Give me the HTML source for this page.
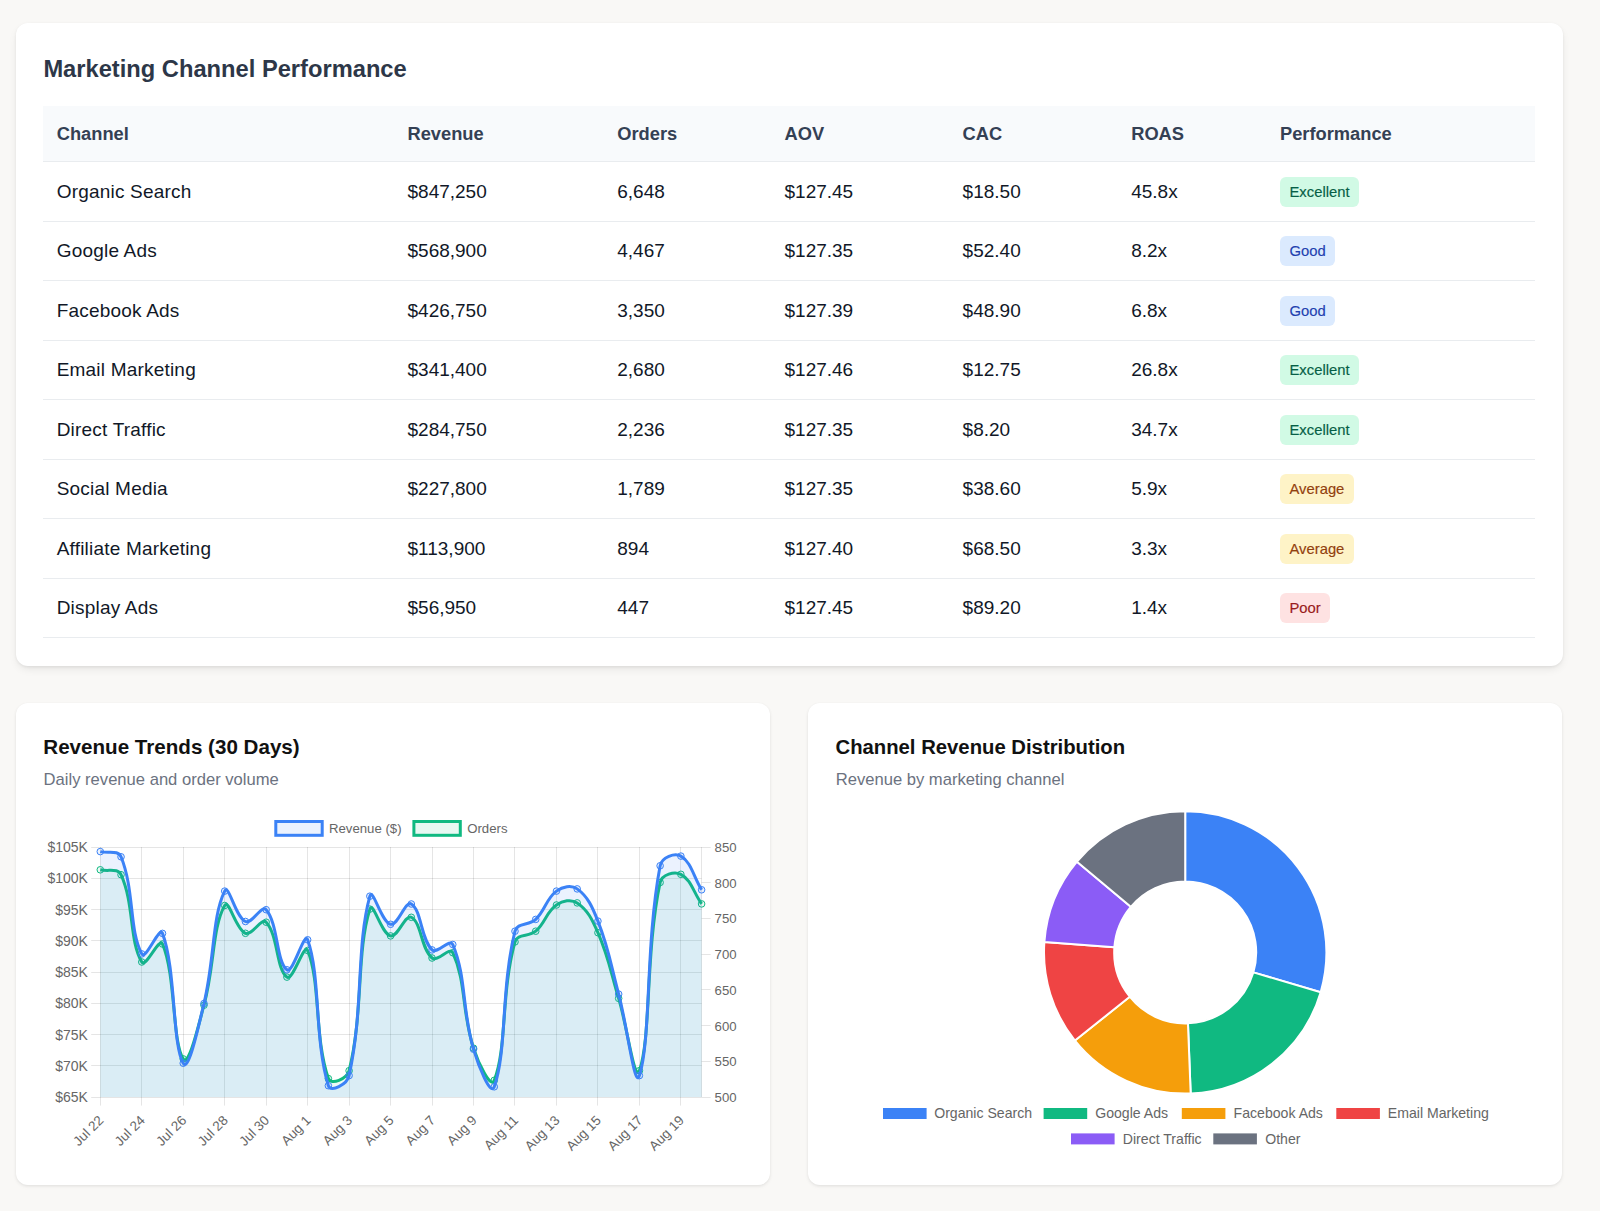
<!DOCTYPE html><html><head><meta charset="utf-8"><title>Marketing Dashboard</title><style>
*{box-sizing:border-box;margin:0;padding:0}
html,body{width:1600px;height:1211px;overflow:hidden;background:#f9f8f6;font-family:"Liberation Sans",sans-serif}
.card{position:absolute;background:#fff;border-radius:12px;box-shadow:0 1px 3px rgba(0,0,0,0.08),0 2px 5px rgba(0,0,0,0.03)}
.t{position:absolute;white-space:nowrap;line-height:1}
.row{position:absolute;left:43.0px;width:1492.0px;border-bottom:1px solid #e9ecef}
.cell{position:absolute;top:0;bottom:0;display:flex;align-items:center;white-space:nowrap}
.hdr{background:#f8fafc}
.hdr .cell{padding-top:2px;font-size:18.3px;font-weight:700;color:#344054}
.body .cell{padding-top:1px;font-size:19px;color:#111827}
.badge{display:inline-flex;align-items:center;height:29.7px;padding:0 9.5px;border-radius:6px;font-size:14.8px;-webkit-text-stroke:0.15px currentColor}
.c0{letter-spacing:0.2px}
svg text{font-family:"Liberation Sans",sans-serif}
</style></head><body>
<div class="card" style="left:15.5px;top:23px;width:1547.5px;height:643px;box-shadow:0 4px 10px -2px rgba(0,0,0,0.10),0 1px 3px rgba(0,0,0,0.06)"></div>
<div class="t" style="left:43.4px;top:57.84px;font-size:23.7px;font-weight:700;color:#2d3748">Marketing Channel Performance</div>
<div class="row hdr" style="top:105.6px;height:56.40px"><div class="cell" style="left:13.70px">Channel</div><div class="cell" style="left:364.50px">Revenue</div><div class="cell" style="left:574.25px">Orders</div><div class="cell" style="left:741.50px">AOV</div><div class="cell" style="left:919.60px">CAC</div><div class="cell" style="left:1088.20px">ROAS</div><div class="cell" style="left:1237.00px">Performance</div></div>
<div class="row body" style="top:162.00px;height:59.5px"><div class="cell c0" style="left:13.70px">Organic Search</div><div class="cell" style="left:364.50px">$847,250</div><div class="cell" style="left:574.25px">6,648</div><div class="cell" style="left:741.50px">$127.45</div><div class="cell" style="left:919.60px">$18.50</div><div class="cell" style="left:1088.20px">45.8x</div><div class="cell" style="left:1237.00px"><span class="badge" style="background:#d1fae5;color:#065f46">Excellent</span></div></div>
<div class="row body" style="top:221.50px;height:59.5px"><div class="cell c0" style="left:13.70px">Google Ads</div><div class="cell" style="left:364.50px">$568,900</div><div class="cell" style="left:574.25px">4,467</div><div class="cell" style="left:741.50px">$127.35</div><div class="cell" style="left:919.60px">$52.40</div><div class="cell" style="left:1088.20px">8.2x</div><div class="cell" style="left:1237.00px"><span class="badge" style="background:#dbeafe;color:#1e40af">Good</span></div></div>
<div class="row body" style="top:281.00px;height:59.5px"><div class="cell c0" style="left:13.70px">Facebook Ads</div><div class="cell" style="left:364.50px">$426,750</div><div class="cell" style="left:574.25px">3,350</div><div class="cell" style="left:741.50px">$127.39</div><div class="cell" style="left:919.60px">$48.90</div><div class="cell" style="left:1088.20px">6.8x</div><div class="cell" style="left:1237.00px"><span class="badge" style="background:#dbeafe;color:#1e40af">Good</span></div></div>
<div class="row body" style="top:340.50px;height:59.5px"><div class="cell c0" style="left:13.70px">Email Marketing</div><div class="cell" style="left:364.50px">$341,400</div><div class="cell" style="left:574.25px">2,680</div><div class="cell" style="left:741.50px">$127.46</div><div class="cell" style="left:919.60px">$12.75</div><div class="cell" style="left:1088.20px">26.8x</div><div class="cell" style="left:1237.00px"><span class="badge" style="background:#d1fae5;color:#065f46">Excellent</span></div></div>
<div class="row body" style="top:400.00px;height:59.5px"><div class="cell c0" style="left:13.70px">Direct Traffic</div><div class="cell" style="left:364.50px">$284,750</div><div class="cell" style="left:574.25px">2,236</div><div class="cell" style="left:741.50px">$127.35</div><div class="cell" style="left:919.60px">$8.20</div><div class="cell" style="left:1088.20px">34.7x</div><div class="cell" style="left:1237.00px"><span class="badge" style="background:#d1fae5;color:#065f46">Excellent</span></div></div>
<div class="row body" style="top:459.50px;height:59.5px"><div class="cell c0" style="left:13.70px">Social Media</div><div class="cell" style="left:364.50px">$227,800</div><div class="cell" style="left:574.25px">1,789</div><div class="cell" style="left:741.50px">$127.35</div><div class="cell" style="left:919.60px">$38.60</div><div class="cell" style="left:1088.20px">5.9x</div><div class="cell" style="left:1237.00px"><span class="badge" style="background:#fef3c7;color:#92400e">Average</span></div></div>
<div class="row body" style="top:519.00px;height:59.5px"><div class="cell c0" style="left:13.70px">Affiliate Marketing</div><div class="cell" style="left:364.50px">$113,900</div><div class="cell" style="left:574.25px">894</div><div class="cell" style="left:741.50px">$127.40</div><div class="cell" style="left:919.60px">$68.50</div><div class="cell" style="left:1088.20px">3.3x</div><div class="cell" style="left:1237.00px"><span class="badge" style="background:#fef3c7;color:#92400e">Average</span></div></div>
<div class="row body" style="top:578.50px;height:59.5px"><div class="cell c0" style="left:13.70px">Display Ads</div><div class="cell" style="left:364.50px">$56,950</div><div class="cell" style="left:574.25px">447</div><div class="cell" style="left:741.50px">$127.45</div><div class="cell" style="left:919.60px">$89.20</div><div class="cell" style="left:1088.20px">1.4x</div><div class="cell" style="left:1237.00px"><span class="badge" style="background:#fee2e2;color:#991b1b">Poor</span></div></div>
<div class="card" style="left:16px;top:703px;width:754.3px;height:482.4px"></div>
<div class="card" style="left:807.8px;top:703px;width:754.7px;height:482.4px"></div>
<div class="t" style="left:43.3px;top:737.33px;font-size:20.6px;font-weight:700;color:#111111">Revenue Trends (30 Days)</div>
<div class="t" style="left:43.6px;top:771.95px;font-size:16.6px;color:#6b7280">Daily revenue and order volume</div>
<div class="t" style="left:835.5px;top:737.12px;font-size:20.3px;font-weight:700;color:#111111">Channel Revenue Distribution</div>
<div class="t" style="left:835.7px;top:771.95px;font-size:16.6px;color:#6b7280">Revenue by marketing channel</div>
<svg width="1600" height="1211" viewBox="0 0 1600 1211" style="position:absolute;left:0;top:0"><line x1="100.5" y1="847.0" x2="100.5" y2="1105.6" stroke="rgba(0,0,0,0.1)" stroke-width="1"/><line x1="141.5" y1="847.0" x2="141.5" y2="1105.6" stroke="rgba(0,0,0,0.1)" stroke-width="1"/><line x1="183.5" y1="847.0" x2="183.5" y2="1105.6" stroke="rgba(0,0,0,0.1)" stroke-width="1"/><line x1="224.5" y1="847.0" x2="224.5" y2="1105.6" stroke="rgba(0,0,0,0.1)" stroke-width="1"/><line x1="266.5" y1="847.0" x2="266.5" y2="1105.6" stroke="rgba(0,0,0,0.1)" stroke-width="1"/><line x1="307.5" y1="847.0" x2="307.5" y2="1105.6" stroke="rgba(0,0,0,0.1)" stroke-width="1"/><line x1="349.5" y1="847.0" x2="349.5" y2="1105.6" stroke="rgba(0,0,0,0.1)" stroke-width="1"/><line x1="390.5" y1="847.0" x2="390.5" y2="1105.6" stroke="rgba(0,0,0,0.1)" stroke-width="1"/><line x1="432.5" y1="847.0" x2="432.5" y2="1105.6" stroke="rgba(0,0,0,0.1)" stroke-width="1"/><line x1="473.5" y1="847.0" x2="473.5" y2="1105.6" stroke="rgba(0,0,0,0.1)" stroke-width="1"/><line x1="514.5" y1="847.0" x2="514.5" y2="1105.6" stroke="rgba(0,0,0,0.1)" stroke-width="1"/><line x1="556.5" y1="847.0" x2="556.5" y2="1105.6" stroke="rgba(0,0,0,0.1)" stroke-width="1"/><line x1="597.5" y1="847.0" x2="597.5" y2="1105.6" stroke="rgba(0,0,0,0.1)" stroke-width="1"/><line x1="639.5" y1="847.0" x2="639.5" y2="1105.6" stroke="rgba(0,0,0,0.1)" stroke-width="1"/><line x1="680.5" y1="847.0" x2="680.5" y2="1105.6" stroke="rgba(0,0,0,0.1)" stroke-width="1"/><line x1="91.2" y1="847.5" x2="701.6" y2="847.5" stroke="rgba(0,0,0,0.1)" stroke-width="1"/><line x1="91.2" y1="878.5" x2="701.6" y2="878.5" stroke="rgba(0,0,0,0.1)" stroke-width="1"/><line x1="91.2" y1="909.5" x2="701.6" y2="909.5" stroke="rgba(0,0,0,0.1)" stroke-width="1"/><line x1="91.2" y1="940.5" x2="701.6" y2="940.5" stroke="rgba(0,0,0,0.1)" stroke-width="1"/><line x1="91.2" y1="972.5" x2="701.6" y2="972.5" stroke="rgba(0,0,0,0.1)" stroke-width="1"/><line x1="91.2" y1="1003.5" x2="701.6" y2="1003.5" stroke="rgba(0,0,0,0.1)" stroke-width="1"/><line x1="91.2" y1="1034.5" x2="701.6" y2="1034.5" stroke="rgba(0,0,0,0.1)" stroke-width="1"/><line x1="91.2" y1="1065.5" x2="701.6" y2="1065.5" stroke="rgba(0,0,0,0.1)" stroke-width="1"/><line x1="91.2" y1="1097.5" x2="701.6" y2="1097.5" stroke="rgba(0,0,0,0.1)" stroke-width="1"/><line x1="701.6" y1="847.5" x2="710.7" y2="847.5" stroke="rgba(0,0,0,0.1)" stroke-width="1"/><line x1="701.6" y1="882.5" x2="710.7" y2="882.5" stroke="rgba(0,0,0,0.1)" stroke-width="1"/><line x1="701.6" y1="918.5" x2="710.7" y2="918.5" stroke="rgba(0,0,0,0.1)" stroke-width="1"/><line x1="701.6" y1="954.5" x2="710.7" y2="954.5" stroke="rgba(0,0,0,0.1)" stroke-width="1"/><line x1="701.6" y1="989.5" x2="710.7" y2="989.5" stroke="rgba(0,0,0,0.1)" stroke-width="1"/><line x1="701.6" y1="1025.5" x2="710.7" y2="1025.5" stroke="rgba(0,0,0,0.1)" stroke-width="1"/><line x1="701.6" y1="1061.5" x2="710.7" y2="1061.5" stroke="rgba(0,0,0,0.1)" stroke-width="1"/><line x1="701.6" y1="1097.5" x2="710.7" y2="1097.5" stroke="rgba(0,0,0,0.1)" stroke-width="1"/><line x1="701.5" y1="847.0" x2="701.5" y2="1097.0" stroke="rgba(0,0,0,0.1)" stroke-width="1"/><path d="M100.30,869.80 C108.59,871.76 117.85,867.62 121.03,874.70 C134.44,904.50 129.07,940.78 141.77,962.00 C145.66,968.50 159.35,936.62 162.50,944.00 C175.93,975.38 172.13,1042.50 183.24,1058.90 C188.72,1066.98 197.98,1027.36 203.97,1005.20 C214.57,966.00 212.33,926.95 224.71,905.50 C228.92,898.19 235.56,929.32 245.44,933.30 C252.14,936.00 261.43,917.19 266.18,922.20 C278.02,934.71 276.38,969.91 286.91,977.10 C292.96,981.23 304.22,942.12 307.64,950.50 C320.81,982.72 314.21,1037.54 328.38,1078.60 C330.80,1085.62 347.13,1078.83 349.11,1070.70 C363.71,1011.03 356.12,953.74 369.85,909.10 C372.70,899.82 381.48,934.10 390.58,935.90 C398.07,937.38 405.03,913.95 411.32,917.30 C421.62,922.79 420.76,948.36 432.05,958.00 C437.34,962.52 449.81,946.22 452.79,952.70 C466.39,982.30 461.60,1011.51 473.52,1048.20 C478.18,1062.55 490.70,1089.42 494.26,1080.30 C507.28,1046.90 500.77,993.02 514.99,941.90 C517.36,933.38 528.90,937.27 535.72,931.20 C545.49,922.51 546.24,911.97 556.46,905.00 C562.83,900.65 571.14,898.86 577.19,902.90 C587.73,909.94 592.20,919.52 597.93,932.70 C608.79,957.72 610.73,972.01 618.66,998.40 C627.32,1027.21 634.68,1083.88 639.40,1070.70 C651.27,1037.52 645.29,952.78 660.13,882.50 C661.88,874.22 674.54,871.03 680.87,874.30 C691.12,879.59 693.31,892.06 701.60,903.90 L701.6,1097.0 L100.3,1097.0 Z" fill="rgba(16,185,129,0.08)" stroke="none"/><path d="M100.30,869.80 C108.59,871.76 117.85,867.62 121.03,874.70 C134.44,904.50 129.07,940.78 141.77,962.00 C145.66,968.50 159.35,936.62 162.50,944.00 C175.93,975.38 172.13,1042.50 183.24,1058.90 C188.72,1066.98 197.98,1027.36 203.97,1005.20 C214.57,966.00 212.33,926.95 224.71,905.50 C228.92,898.19 235.56,929.32 245.44,933.30 C252.14,936.00 261.43,917.19 266.18,922.20 C278.02,934.71 276.38,969.91 286.91,977.10 C292.96,981.23 304.22,942.12 307.64,950.50 C320.81,982.72 314.21,1037.54 328.38,1078.60 C330.80,1085.62 347.13,1078.83 349.11,1070.70 C363.71,1011.03 356.12,953.74 369.85,909.10 C372.70,899.82 381.48,934.10 390.58,935.90 C398.07,937.38 405.03,913.95 411.32,917.30 C421.62,922.79 420.76,948.36 432.05,958.00 C437.34,962.52 449.81,946.22 452.79,952.70 C466.39,982.30 461.60,1011.51 473.52,1048.20 C478.18,1062.55 490.70,1089.42 494.26,1080.30 C507.28,1046.90 500.77,993.02 514.99,941.90 C517.36,933.38 528.90,937.27 535.72,931.20 C545.49,922.51 546.24,911.97 556.46,905.00 C562.83,900.65 571.14,898.86 577.19,902.90 C587.73,909.94 592.20,919.52 597.93,932.70 C608.79,957.72 610.73,972.01 618.66,998.40 C627.32,1027.21 634.68,1083.88 639.40,1070.70 C651.27,1037.52 645.29,952.78 660.13,882.50 C661.88,874.22 674.54,871.03 680.87,874.30 C691.12,879.59 693.31,892.06 701.60,903.90" fill="none" stroke="#10b981" stroke-width="3" stroke-linejoin="round"/><circle cx="100.30" cy="869.80" r="3.3" fill="rgba(16,185,129,0.08)" stroke="#10b981" stroke-width="1"/><circle cx="121.03" cy="874.70" r="3.3" fill="rgba(16,185,129,0.08)" stroke="#10b981" stroke-width="1"/><circle cx="141.77" cy="962.00" r="3.3" fill="rgba(16,185,129,0.08)" stroke="#10b981" stroke-width="1"/><circle cx="162.50" cy="944.00" r="3.3" fill="rgba(16,185,129,0.08)" stroke="#10b981" stroke-width="1"/><circle cx="183.24" cy="1058.90" r="3.3" fill="rgba(16,185,129,0.08)" stroke="#10b981" stroke-width="1"/><circle cx="203.97" cy="1005.20" r="3.3" fill="rgba(16,185,129,0.08)" stroke="#10b981" stroke-width="1"/><circle cx="224.71" cy="905.50" r="3.3" fill="rgba(16,185,129,0.08)" stroke="#10b981" stroke-width="1"/><circle cx="245.44" cy="933.30" r="3.3" fill="rgba(16,185,129,0.08)" stroke="#10b981" stroke-width="1"/><circle cx="266.18" cy="922.20" r="3.3" fill="rgba(16,185,129,0.08)" stroke="#10b981" stroke-width="1"/><circle cx="286.91" cy="977.10" r="3.3" fill="rgba(16,185,129,0.08)" stroke="#10b981" stroke-width="1"/><circle cx="307.64" cy="950.50" r="3.3" fill="rgba(16,185,129,0.08)" stroke="#10b981" stroke-width="1"/><circle cx="328.38" cy="1078.60" r="3.3" fill="rgba(16,185,129,0.08)" stroke="#10b981" stroke-width="1"/><circle cx="349.11" cy="1070.70" r="3.3" fill="rgba(16,185,129,0.08)" stroke="#10b981" stroke-width="1"/><circle cx="369.85" cy="909.10" r="3.3" fill="rgba(16,185,129,0.08)" stroke="#10b981" stroke-width="1"/><circle cx="390.58" cy="935.90" r="3.3" fill="rgba(16,185,129,0.08)" stroke="#10b981" stroke-width="1"/><circle cx="411.32" cy="917.30" r="3.3" fill="rgba(16,185,129,0.08)" stroke="#10b981" stroke-width="1"/><circle cx="432.05" cy="958.00" r="3.3" fill="rgba(16,185,129,0.08)" stroke="#10b981" stroke-width="1"/><circle cx="452.79" cy="952.70" r="3.3" fill="rgba(16,185,129,0.08)" stroke="#10b981" stroke-width="1"/><circle cx="473.52" cy="1048.20" r="3.3" fill="rgba(16,185,129,0.08)" stroke="#10b981" stroke-width="1"/><circle cx="494.26" cy="1080.30" r="3.3" fill="rgba(16,185,129,0.08)" stroke="#10b981" stroke-width="1"/><circle cx="514.99" cy="941.90" r="3.3" fill="rgba(16,185,129,0.08)" stroke="#10b981" stroke-width="1"/><circle cx="535.72" cy="931.20" r="3.3" fill="rgba(16,185,129,0.08)" stroke="#10b981" stroke-width="1"/><circle cx="556.46" cy="905.00" r="3.3" fill="rgba(16,185,129,0.08)" stroke="#10b981" stroke-width="1"/><circle cx="577.19" cy="902.90" r="3.3" fill="rgba(16,185,129,0.08)" stroke="#10b981" stroke-width="1"/><circle cx="597.93" cy="932.70" r="3.3" fill="rgba(16,185,129,0.08)" stroke="#10b981" stroke-width="1"/><circle cx="618.66" cy="998.40" r="3.3" fill="rgba(16,185,129,0.08)" stroke="#10b981" stroke-width="1"/><circle cx="639.40" cy="1070.70" r="3.3" fill="rgba(16,185,129,0.08)" stroke="#10b981" stroke-width="1"/><circle cx="660.13" cy="882.50" r="3.3" fill="rgba(16,185,129,0.08)" stroke="#10b981" stroke-width="1"/><circle cx="680.87" cy="874.30" r="3.3" fill="rgba(16,185,129,0.08)" stroke="#10b981" stroke-width="1"/><circle cx="701.60" cy="903.90" r="3.3" fill="rgba(16,185,129,0.08)" stroke="#10b981" stroke-width="1"/><path d="M100.30,851.60 C108.59,853.68 118.10,849.55 121.03,856.80 C134.68,890.47 128.95,930.22 141.77,953.90 C145.53,960.86 159.49,925.46 162.50,933.40 C176.08,969.18 172.04,1044.26 183.24,1063.20 C188.62,1072.30 198.07,1028.01 203.97,1003.50 C214.65,959.17 212.16,915.91 224.71,891.10 C228.75,883.11 235.38,916.99 245.44,921.50 C251.97,924.43 261.65,904.43 266.18,909.70 C278.24,923.75 276.37,962.15 286.91,969.80 C292.96,974.19 304.35,930.60 307.64,939.80 C320.94,976.96 314.04,1038.73 328.38,1085.70 C330.62,1093.05 347.24,1084.18 349.11,1075.60 C363.82,1008.38 355.95,946.91 369.85,896.20 C372.54,886.39 381.52,922.60 390.58,924.30 C398.11,925.72 405.25,900.26 411.32,904.00 C421.84,910.50 420.41,938.53 432.05,949.90 C437.00,954.73 450.01,937.86 452.79,944.50 C466.60,977.58 461.69,1008.61 473.52,1049.20 C478.28,1065.53 490.69,1096.94 494.26,1086.80 C507.28,1049.74 500.59,989.33 514.99,931.20 C517.18,922.37 529.01,925.89 535.72,919.40 C545.60,909.85 546.05,898.75 556.46,891.10 C562.64,886.55 571.35,884.67 577.19,888.90 C587.93,896.67 592.36,906.99 597.93,921.10 C608.95,949.07 610.79,964.79 618.66,994.10 C627.38,1026.59 634.67,1090.23 639.40,1075.60 C651.25,1038.91 645.17,945.00 660.13,865.80 C661.76,857.20 674.79,852.58 680.87,856.10 C691.37,862.18 693.31,876.32 701.60,889.80 L701.6,1097.0 L100.3,1097.0 Z" fill="rgba(59,130,246,0.1)" stroke="none"/><path d="M100.30,851.60 C108.59,853.68 118.10,849.55 121.03,856.80 C134.68,890.47 128.95,930.22 141.77,953.90 C145.53,960.86 159.49,925.46 162.50,933.40 C176.08,969.18 172.04,1044.26 183.24,1063.20 C188.62,1072.30 198.07,1028.01 203.97,1003.50 C214.65,959.17 212.16,915.91 224.71,891.10 C228.75,883.11 235.38,916.99 245.44,921.50 C251.97,924.43 261.65,904.43 266.18,909.70 C278.24,923.75 276.37,962.15 286.91,969.80 C292.96,974.19 304.35,930.60 307.64,939.80 C320.94,976.96 314.04,1038.73 328.38,1085.70 C330.62,1093.05 347.24,1084.18 349.11,1075.60 C363.82,1008.38 355.95,946.91 369.85,896.20 C372.54,886.39 381.52,922.60 390.58,924.30 C398.11,925.72 405.25,900.26 411.32,904.00 C421.84,910.50 420.41,938.53 432.05,949.90 C437.00,954.73 450.01,937.86 452.79,944.50 C466.60,977.58 461.69,1008.61 473.52,1049.20 C478.28,1065.53 490.69,1096.94 494.26,1086.80 C507.28,1049.74 500.59,989.33 514.99,931.20 C517.18,922.37 529.01,925.89 535.72,919.40 C545.60,909.85 546.05,898.75 556.46,891.10 C562.64,886.55 571.35,884.67 577.19,888.90 C587.93,896.67 592.36,906.99 597.93,921.10 C608.95,949.07 610.79,964.79 618.66,994.10 C627.38,1026.59 634.67,1090.23 639.40,1075.60 C651.25,1038.91 645.17,945.00 660.13,865.80 C661.76,857.20 674.79,852.58 680.87,856.10 C691.37,862.18 693.31,876.32 701.60,889.80" fill="none" stroke="#3b82f6" stroke-width="3" stroke-linejoin="round"/><circle cx="100.30" cy="851.60" r="3.3" fill="rgba(59,130,246,0.1)" stroke="#3b82f6" stroke-width="1"/><circle cx="121.03" cy="856.80" r="3.3" fill="rgba(59,130,246,0.1)" stroke="#3b82f6" stroke-width="1"/><circle cx="141.77" cy="953.90" r="3.3" fill="rgba(59,130,246,0.1)" stroke="#3b82f6" stroke-width="1"/><circle cx="162.50" cy="933.40" r="3.3" fill="rgba(59,130,246,0.1)" stroke="#3b82f6" stroke-width="1"/><circle cx="183.24" cy="1063.20" r="3.3" fill="rgba(59,130,246,0.1)" stroke="#3b82f6" stroke-width="1"/><circle cx="203.97" cy="1003.50" r="3.3" fill="rgba(59,130,246,0.1)" stroke="#3b82f6" stroke-width="1"/><circle cx="224.71" cy="891.10" r="3.3" fill="rgba(59,130,246,0.1)" stroke="#3b82f6" stroke-width="1"/><circle cx="245.44" cy="921.50" r="3.3" fill="rgba(59,130,246,0.1)" stroke="#3b82f6" stroke-width="1"/><circle cx="266.18" cy="909.70" r="3.3" fill="rgba(59,130,246,0.1)" stroke="#3b82f6" stroke-width="1"/><circle cx="286.91" cy="969.80" r="3.3" fill="rgba(59,130,246,0.1)" stroke="#3b82f6" stroke-width="1"/><circle cx="307.64" cy="939.80" r="3.3" fill="rgba(59,130,246,0.1)" stroke="#3b82f6" stroke-width="1"/><circle cx="328.38" cy="1085.70" r="3.3" fill="rgba(59,130,246,0.1)" stroke="#3b82f6" stroke-width="1"/><circle cx="349.11" cy="1075.60" r="3.3" fill="rgba(59,130,246,0.1)" stroke="#3b82f6" stroke-width="1"/><circle cx="369.85" cy="896.20" r="3.3" fill="rgba(59,130,246,0.1)" stroke="#3b82f6" stroke-width="1"/><circle cx="390.58" cy="924.30" r="3.3" fill="rgba(59,130,246,0.1)" stroke="#3b82f6" stroke-width="1"/><circle cx="411.32" cy="904.00" r="3.3" fill="rgba(59,130,246,0.1)" stroke="#3b82f6" stroke-width="1"/><circle cx="432.05" cy="949.90" r="3.3" fill="rgba(59,130,246,0.1)" stroke="#3b82f6" stroke-width="1"/><circle cx="452.79" cy="944.50" r="3.3" fill="rgba(59,130,246,0.1)" stroke="#3b82f6" stroke-width="1"/><circle cx="473.52" cy="1049.20" r="3.3" fill="rgba(59,130,246,0.1)" stroke="#3b82f6" stroke-width="1"/><circle cx="494.26" cy="1086.80" r="3.3" fill="rgba(59,130,246,0.1)" stroke="#3b82f6" stroke-width="1"/><circle cx="514.99" cy="931.20" r="3.3" fill="rgba(59,130,246,0.1)" stroke="#3b82f6" stroke-width="1"/><circle cx="535.72" cy="919.40" r="3.3" fill="rgba(59,130,246,0.1)" stroke="#3b82f6" stroke-width="1"/><circle cx="556.46" cy="891.10" r="3.3" fill="rgba(59,130,246,0.1)" stroke="#3b82f6" stroke-width="1"/><circle cx="577.19" cy="888.90" r="3.3" fill="rgba(59,130,246,0.1)" stroke="#3b82f6" stroke-width="1"/><circle cx="597.93" cy="921.10" r="3.3" fill="rgba(59,130,246,0.1)" stroke="#3b82f6" stroke-width="1"/><circle cx="618.66" cy="994.10" r="3.3" fill="rgba(59,130,246,0.1)" stroke="#3b82f6" stroke-width="1"/><circle cx="639.40" cy="1075.60" r="3.3" fill="rgba(59,130,246,0.1)" stroke="#3b82f6" stroke-width="1"/><circle cx="660.13" cy="865.80" r="3.3" fill="rgba(59,130,246,0.1)" stroke="#3b82f6" stroke-width="1"/><circle cx="680.87" cy="856.10" r="3.3" fill="rgba(59,130,246,0.1)" stroke="#3b82f6" stroke-width="1"/><circle cx="701.60" cy="889.80" r="3.3" fill="rgba(59,130,246,0.1)" stroke="#3b82f6" stroke-width="1"/><text x="87.9" y="852.00" font-size="14" fill="#666666" text-anchor="end">$105K</text><text x="87.9" y="883.25" font-size="14" fill="#666666" text-anchor="end">$100K</text><text x="87.9" y="914.50" font-size="14" fill="#666666" text-anchor="end">$95K</text><text x="87.9" y="945.75" font-size="14" fill="#666666" text-anchor="end">$90K</text><text x="87.9" y="977.00" font-size="14" fill="#666666" text-anchor="end">$85K</text><text x="87.9" y="1008.25" font-size="14" fill="#666666" text-anchor="end">$80K</text><text x="87.9" y="1039.50" font-size="14" fill="#666666" text-anchor="end">$75K</text><text x="87.9" y="1070.75" font-size="14" fill="#666666" text-anchor="end">$70K</text><text x="87.9" y="1102.00" font-size="14" fill="#666666" text-anchor="end">$65K</text><text x="714.6" y="852.00" font-size="13.2" fill="#666666">850</text><text x="714.6" y="887.71" font-size="13.2" fill="#666666">800</text><text x="714.6" y="923.43" font-size="13.2" fill="#666666">750</text><text x="714.6" y="959.14" font-size="13.2" fill="#666666">700</text><text x="714.6" y="994.86" font-size="13.2" fill="#666666">650</text><text x="714.6" y="1030.57" font-size="13.2" fill="#666666">600</text><text x="714.6" y="1066.29" font-size="13.2" fill="#666666">550</text><text x="714.6" y="1102.00" font-size="13.2" fill="#666666">500</text><text transform="translate(104.30,1121.2) rotate(-45)" font-size="13.5" fill="#666666" text-anchor="end">Jul 22</text><text transform="translate(145.77,1121.2) rotate(-45)" font-size="13.5" fill="#666666" text-anchor="end">Jul 24</text><text transform="translate(187.24,1121.2) rotate(-45)" font-size="13.5" fill="#666666" text-anchor="end">Jul 26</text><text transform="translate(228.71,1121.2) rotate(-45)" font-size="13.5" fill="#666666" text-anchor="end">Jul 28</text><text transform="translate(270.18,1121.2) rotate(-45)" font-size="13.5" fill="#666666" text-anchor="end">Jul 30</text><text transform="translate(311.64,1121.2) rotate(-45)" font-size="13.5" fill="#666666" text-anchor="end">Aug 1</text><text transform="translate(353.11,1121.2) rotate(-45)" font-size="13.5" fill="#666666" text-anchor="end">Aug 3</text><text transform="translate(394.58,1121.2) rotate(-45)" font-size="13.5" fill="#666666" text-anchor="end">Aug 5</text><text transform="translate(436.05,1121.2) rotate(-45)" font-size="13.5" fill="#666666" text-anchor="end">Aug 7</text><text transform="translate(477.52,1121.2) rotate(-45)" font-size="13.5" fill="#666666" text-anchor="end">Aug 9</text><text transform="translate(518.99,1121.2) rotate(-45)" font-size="13.5" fill="#666666" text-anchor="end">Aug 11</text><text transform="translate(560.46,1121.2) rotate(-45)" font-size="13.5" fill="#666666" text-anchor="end">Aug 13</text><text transform="translate(601.93,1121.2) rotate(-45)" font-size="13.5" fill="#666666" text-anchor="end">Aug 15</text><text transform="translate(643.40,1121.2) rotate(-45)" font-size="13.5" fill="#666666" text-anchor="end">Aug 17</text><text transform="translate(684.87,1121.2) rotate(-45)" font-size="13.5" fill="#666666" text-anchor="end">Aug 19</text><rect x="275.8" y="821.5" width="46.4" height="13.8" fill="rgba(59,130,246,0.1)" stroke="#3b82f6" stroke-width="3"/><text x="329" y="833.2" font-size="13.2" fill="#666666">Revenue ($)</text><rect x="413.9" y="821.5" width="46.4" height="13.8" fill="rgba(16,185,129,0.1)" stroke="#10b981" stroke-width="3"/><text x="467.2" y="833.2" font-size="13.2" fill="#666666">Orders</text><path d="M1185.20,811.20 A141.2,141.2 0 0 1 1320.68,992.17 L1253.33,972.40 A71.0,71.0 0 0 0 1185.20,881.40 Z" fill="#3b82f6" stroke="#ffffff" stroke-width="2" stroke-linejoin="bevel"/><path d="M1320.68,992.17 A141.2,141.2 0 0 1 1190.67,1093.49 L1187.95,1023.35 A71.0,71.0 0 0 0 1253.33,972.40 Z" fill="#10b981" stroke="#ffffff" stroke-width="2" stroke-linejoin="bevel"/><path d="M1190.67,1093.49 A141.2,141.2 0 0 1 1074.93,1040.59 L1129.75,996.74 A71.0,71.0 0 0 0 1187.95,1023.35 Z" fill="#f59e0b" stroke="#ffffff" stroke-width="2" stroke-linejoin="bevel"/><path d="M1074.93,1040.59 A141.2,141.2 0 0 1 1044.38,942.04 L1114.39,947.19 A71.0,71.0 0 0 0 1129.75,996.74 Z" fill="#ef4444" stroke="#ffffff" stroke-width="2" stroke-linejoin="bevel"/><path d="M1044.38,942.04 A141.2,141.2 0 0 1 1076.96,861.72 L1130.78,906.80 A71.0,71.0 0 0 0 1114.39,947.19 Z" fill="#8b5cf6" stroke="#ffffff" stroke-width="2" stroke-linejoin="bevel"/><path d="M1076.96,861.72 A141.2,141.2 0 0 1 1185.20,811.20 L1185.20,881.40 A71.0,71.0 0 0 0 1130.78,906.80 Z" fill="#6b7280" stroke="#ffffff" stroke-width="2" stroke-linejoin="bevel"/><rect x="883" y="1108" width="43.6" height="11" fill="#3b82f6"/><text x="934.2" y="1118.30" font-size="14.1" fill="#666666">Organic Search</text><rect x="1043.6" y="1108" width="43.6" height="11" fill="#10b981"/><text x="1095.2" y="1118.30" font-size="14.1" fill="#666666">Google Ads</text><rect x="1181.8" y="1108" width="43.6" height="11" fill="#f59e0b"/><text x="1233.6000000000001" y="1118.30" font-size="14.1" fill="#666666">Facebook Ads</text><rect x="1336.3" y="1108" width="43.6" height="11" fill="#ef4444"/><text x="1387.8" y="1118.30" font-size="14.1" fill="#666666">Email Marketing</text><rect x="1071" y="1133.4" width="43.6" height="11" fill="#8b5cf6"/><text x="1122.8" y="1143.70" font-size="14.1" fill="#666666">Direct Traffic</text><rect x="1213.3" y="1133.4" width="43.6" height="11" fill="#6b7280"/><text x="1265.2" y="1143.70" font-size="14.1" fill="#666666">Other</text></svg>
</body></html>
